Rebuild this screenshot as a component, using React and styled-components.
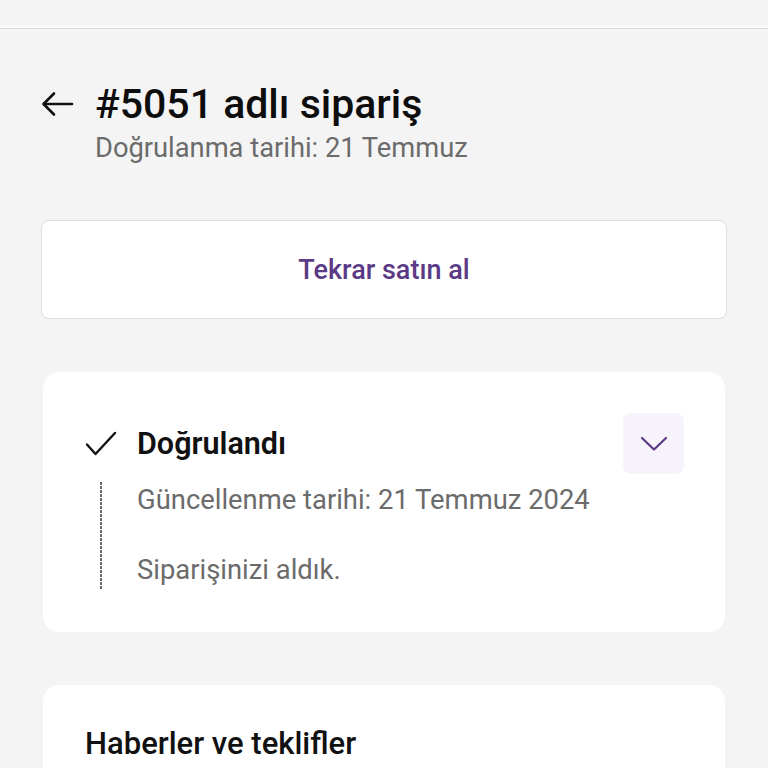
import React from 'react';
import styled, { createGlobalStyle } from 'styled-components';

const GlobalStyle = createGlobalStyle`
  body {
    margin: 0;
    background: #f4f4f4;
    font-family: Roboto, "Noto Sans", "Liberation Sans", sans-serif;
    color: #111;
  }
`;

const Page = styled.div`
  width: 768px;
  height: 768px;
  overflow: hidden;
  background: #f4f4f4;
`;

const TopBar = styled.div`
  height: 26px;
  border-bottom: 2px solid #fafafa;
  box-shadow: 0 1px 0 #dcdcdc;
`;

const Content = styled.div`
  padding: 54px 41px 0 41px;
`;

const TitleRow = styled.div`
  display: flex;
  align-items: center;
  gap: 19px;
`;

const BackButton = styled.button`
  border: none;
  background: none;
  padding: 0;
  width: 35px;
  height: 44px;
  display: flex;
  align-items: center;
  color: #111;
`;

const Title = styled.h1`
  margin: 0;
  font-size: 41px;
  line-height: 44px;
  font-weight: 500;
  color: #0d0d0d;
`;

const Subtitle = styled.div`
  margin-left: 54px;
  margin-top: 6px;
  font-size: 27.3px;
  line-height: 32px;
  color: #6b6b6b;
`;

const BuyAgain = styled.button`
  display: block;
  width: 100%;
  height: 99px;
  margin-top: 56px;
  background: #fff;
  border: 1.5px solid #dedede;
  border-radius: 8px;
  font-family: inherit;
  font-size: 27px;
  font-weight: 500;
  color: #5b3a86;
`;

const Card = styled.section`
  margin: ${p => p.$top}px 2px 0 2px;
  background: #fff;
  border-radius: 16px;
  padding: ${p => p.$pad};
`;

const StatusHead = styled.div`
  display: flex;
  align-items: center;
  height: 61px;
`;

const CheckIcon = styled.span`
  width: 52px;
  display: flex;
  align-items: center;
`;

const StatusTitle = styled.h2`
  flex: 1;
  margin: 0;
  font-size: 30.5px;
  font-weight: 600;
  line-height: 36px;
`;

const ChevronButton = styled.button`
  width: 61px;
  height: 61px;
  border: none;
  border-radius: 8px;
  background: #f7f3fb;
  display: flex;
  align-items: center;
  justify-content: center;
  padding: 0;
  color: #5b3a86;
`;

const StatusBody = styled.div`
  display: flex;
  margin-top: 8px;
`;

const RailCol = styled.div`
  width: 52px;
  display: flex;
`;

const Rail = styled.div`
  margin-left: 15px;
  width: 1.5px;
  height: 108px;
  background-image: repeating-linear-gradient(to bottom, #6a6a6a 0 3px, transparent 3px 4px);
`;

const Lines = styled.div`
  display: flex;
  flex-direction: column;
  gap: 34px;
`;

const Line = styled.div`
  font-size: 27.4px;
  line-height: 36px;
  color: #6b6b6b;
`;

const SectionTitle = styled.h2`
  margin: 0;
  font-size: 31px;
  font-weight: 500;
  line-height: 36px;
`;

export default function App() {
  return (
    <Page>
      <GlobalStyle />
      <TopBar />
      <Content>
        <TitleRow>
          <BackButton aria-label="Geri">
            <svg width="33" height="26" viewBox="0 0 33 26" fill="none" stroke="currentColor" strokeWidth="2.6" strokeLinecap="round" strokeLinejoin="round">
              <path d="M31 13H3" />
              <path d="M13 2.5L2.5 13L13 23.5" />
            </svg>
          </BackButton>
          <Title>#5051 adlı sipariş</Title>
        </TitleRow>
        <Subtitle>Doğrulanma tarihi: 21 Temmuz</Subtitle>

        <BuyAgain>Tekrar satın al</BuyAgain>

        <Card $top={53} $pad="41px 41px 42px 42px">
          <StatusHead>
            <CheckIcon>
              <svg width="32" height="26" viewBox="0 0 32 26" fill="none" stroke="#111" strokeWidth="2.4" strokeLinecap="round" strokeLinejoin="round">
                <path d="M2 13.5L10.5 23L30 2" />
              </svg>
            </CheckIcon>
            <StatusTitle>Doğrulandı</StatusTitle>
            <ChevronButton aria-label="Aç">
              <svg width="28" height="16" viewBox="0 0 28 16" fill="none" stroke="currentColor" strokeWidth="2.2" strokeLinecap="round" strokeLinejoin="round">
                <path d="M2 2L14 13.5L26 2" />
              </svg>
            </ChevronButton>
          </StatusHead>
          <StatusBody>
            <RailCol>
              <Rail />
            </RailCol>
            <Lines>
              <Line>Güncellenme tarihi: 21 Temmuz 2024</Line>
              <Line>Siparişinizi aldık.</Line>
            </Lines>
          </StatusBody>
        </Card>

        <Card $top={53} $pad="41px 42px">
          <SectionTitle>Haberler ve teklifler</SectionTitle>
        </Card>
      </Content>
    </Page>
  );
}
